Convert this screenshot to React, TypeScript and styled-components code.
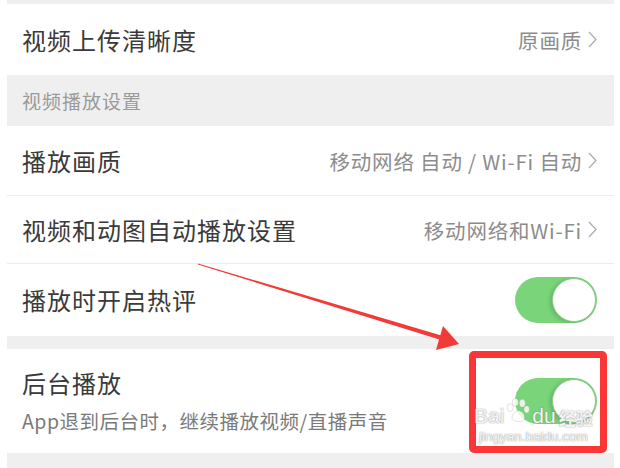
import styled, { createGlobalStyle } from "styled-components";

const GlobalStyle = createGlobalStyle`
    html, body {
        margin: 0;
        padding: 0;
        background: #ffffff;
    }
    body {
        font-family: "Noto Sans CJK SC", "Noto Sans", sans-serif;
    }
`;

const Screen = styled.div`
    position: relative;
    width: 620px;
    height: 468px;
    padding: 0 6px 0 7px;
    box-sizing: border-box;
    overflow: hidden;
    background: #ffffff;
`;

const Panel = styled.div`
    height: 100%;
    display: flex;
    flex-direction: column;
    background: #efefef;
    padding-top: 4px;
    box-sizing: border-box;
`;

const Row = styled.div<{ $h: number; $divider?: boolean }>`
    height: ${p => p.$h}px;
    flex: none;
    display: flex;
    align-items: center;
    justify-content: space-between;
    padding: 0 17px 0 15px;
    background: #ffffff;
    box-sizing: border-box;
    border-bottom: ${p => (p.$divider ? "1px solid #ededed" : "none")};
`;

const SectionHeader = styled.div`
    height: 51px;
    flex: none;
    display: flex;
    align-items: center;
    padding: 0 15px;
    font-size: 19px;
    letter-spacing: 1px;
    color: #9a9a9a;
`;

const Gap = styled.div<{ $h: number }>`
    height: ${p => p.$h}px;
    flex: none;
`;

const TextBlock = styled.div`
    display: flex;
    flex-direction: column;
    gap: 9px;
`;

const Title = styled.span`
    font-size: 24px;
    line-height: 30px;
    letter-spacing: 1px;
    color: #3a3a3a;
`;

const Subtitle = styled.span`
    font-size: 19.5px;
    line-height: 28px;
    letter-spacing: 0.5px;
    color: #7a7a7a;
`;

const Value = styled.div`
    display: flex;
    align-items: center;
    gap: 6px;
    font-size: 20.5px;
    letter-spacing: 0.8px;
    color: #8c8c8c;
`;

const Track = styled.div<{ $on: boolean }>`
    width: 82px;
    height: 46px;
    border-radius: 23px;
    background: ${p => (p.$on ? "#7ad479" : "#e5e5e5")};
    display: flex;
    align-items: center;
    justify-content: ${p => (p.$on ? "flex-end" : "flex-start")};
    padding: 1px;
    box-sizing: border-box;
`;

const Knob = styled.div`
    width: 44px;
    height: 44px;
    border-radius: 50%;
    background: #ffffff;
    box-sizing: border-box;
    border: 1px solid #8ccb8b;
    box-shadow: -2px 1px 4px rgba(0, 0, 0, 0.16);
`;

const Highlight = styled.div`
    position: absolute;
    left: 469px;
    top: 351px;
    width: 138px;
    height: 102px;
    border: 7px solid #fb3636;
    border-radius: 5px;
    box-sizing: border-box;
`;

const ArrowLayer = styled.svg`
    position: absolute;
    left: 0;
    top: 0;
    pointer-events: none;
`;

const Watermark = styled.div`
    position: absolute;
    left: 474px;
    top: 398px;
    display: flex;
    flex-direction: column;
    align-items: center;
    color: rgba(255, 255, 255, 0.92);
    text-shadow: 0 0 1px rgba(110, 110, 110, 0.75), 0 0 2px rgba(150, 150, 150, 0.5);
    font-family: "Liberation Sans", Arial, sans-serif;
`;

const MarkTop = styled.div`
    display: flex;
    align-items: flex-end;
    font-size: 21px;
    line-height: 1;
`;

const MarkCn = styled.span`
    font-family: "Noto Sans CJK SC", sans-serif;
    font-size: 17px;
    font-weight: 700;
    margin-left: 3px;
`;

const MarkUrl = styled.div`
    font-size: 13.5px;
    margin-top: 3px;
`;

function Chevron() {
    return (
        <svg width="9" height="17" viewBox="0 0 9 17">
            <path d="M1 1 L8 8.5 L1 16" fill="none" stroke="#adadad" strokeWidth="1.3" />
        </svg>
    );
}

function Paw() {
    return (
        <svg width="26" height="26" viewBox="0 0 30 30" style={{ margin: "0 1px 2px" }}>
            <g fill="rgba(255,255,255,0.8)" stroke="rgba(140,140,140,0.35)" strokeWidth="0.8">
                <ellipse cx="6" cy="11" rx="3.5" ry="4.5" />
                <ellipse cx="12" cy="5" rx="3.5" ry="4.5" />
                <ellipse cx="20" cy="6" rx="3.5" ry="4.5" />
                <ellipse cx="25" cy="13" rx="3.2" ry="4.2" />
                <path d="M8 24 C8 17 14 14 17 15 C21 16 24 21 22 25 C20 28 11 28 8 24 Z" />
            </g>
        </svg>
    );
}

function Toggle({ on }: { on: boolean }) {
    return (
        <Track $on={on}>
            <Knob />
        </Track>
    );
}

export default function App() {
    return (
        <Screen>
            <GlobalStyle />
            <Panel>
                <Row $h={71}>
                    <Title>视频上传清晰度</Title>
                    <Value>原画质<Chevron /></Value>
                </Row>
                <SectionHeader>视频播放设置</SectionHeader>
                <Row $h={70} $divider>
                    <Title>播放画质</Title>
                    <Value>移动网络 自动 / Wi-Fi 自动<Chevron /></Value>
                </Row>
                <Row $h={68} $divider>
                    <Title>视频和动图自动播放设置</Title>
                    <Value>移动网络和Wi-Fi<Chevron /></Value>
                </Row>
                <Row $h={72}>
                    <Title>播放时开启热评</Title>
                    <Toggle on />
                </Row>
                <Gap $h={13} />
                <Row $h={104}>
                    <TextBlock>
                        <Title>后台播放</Title>
                        <Subtitle>App退到后台时，继续播放视频/直播声音</Subtitle>
                    </TextBlock>
                    <Toggle on />
                </Row>
            </Panel>

            <ArrowLayer width="620" height="468" viewBox="0 0 620 468">
                <polygon points="198,263.5 443,336 441,340 198,264.5" fill="#f23a36" />
                <polygon points="459,344 436,350 443,326" fill="#f23a36" />
            </ArrowLayer>
            <Highlight />
            <Watermark>
                <MarkTop>
                    Bai<Paw />du<MarkCn>经验</MarkCn>
                </MarkTop>
                <MarkUrl>jingyan.baidu.com</MarkUrl>
            </Watermark>
        </Screen>
    );
}
